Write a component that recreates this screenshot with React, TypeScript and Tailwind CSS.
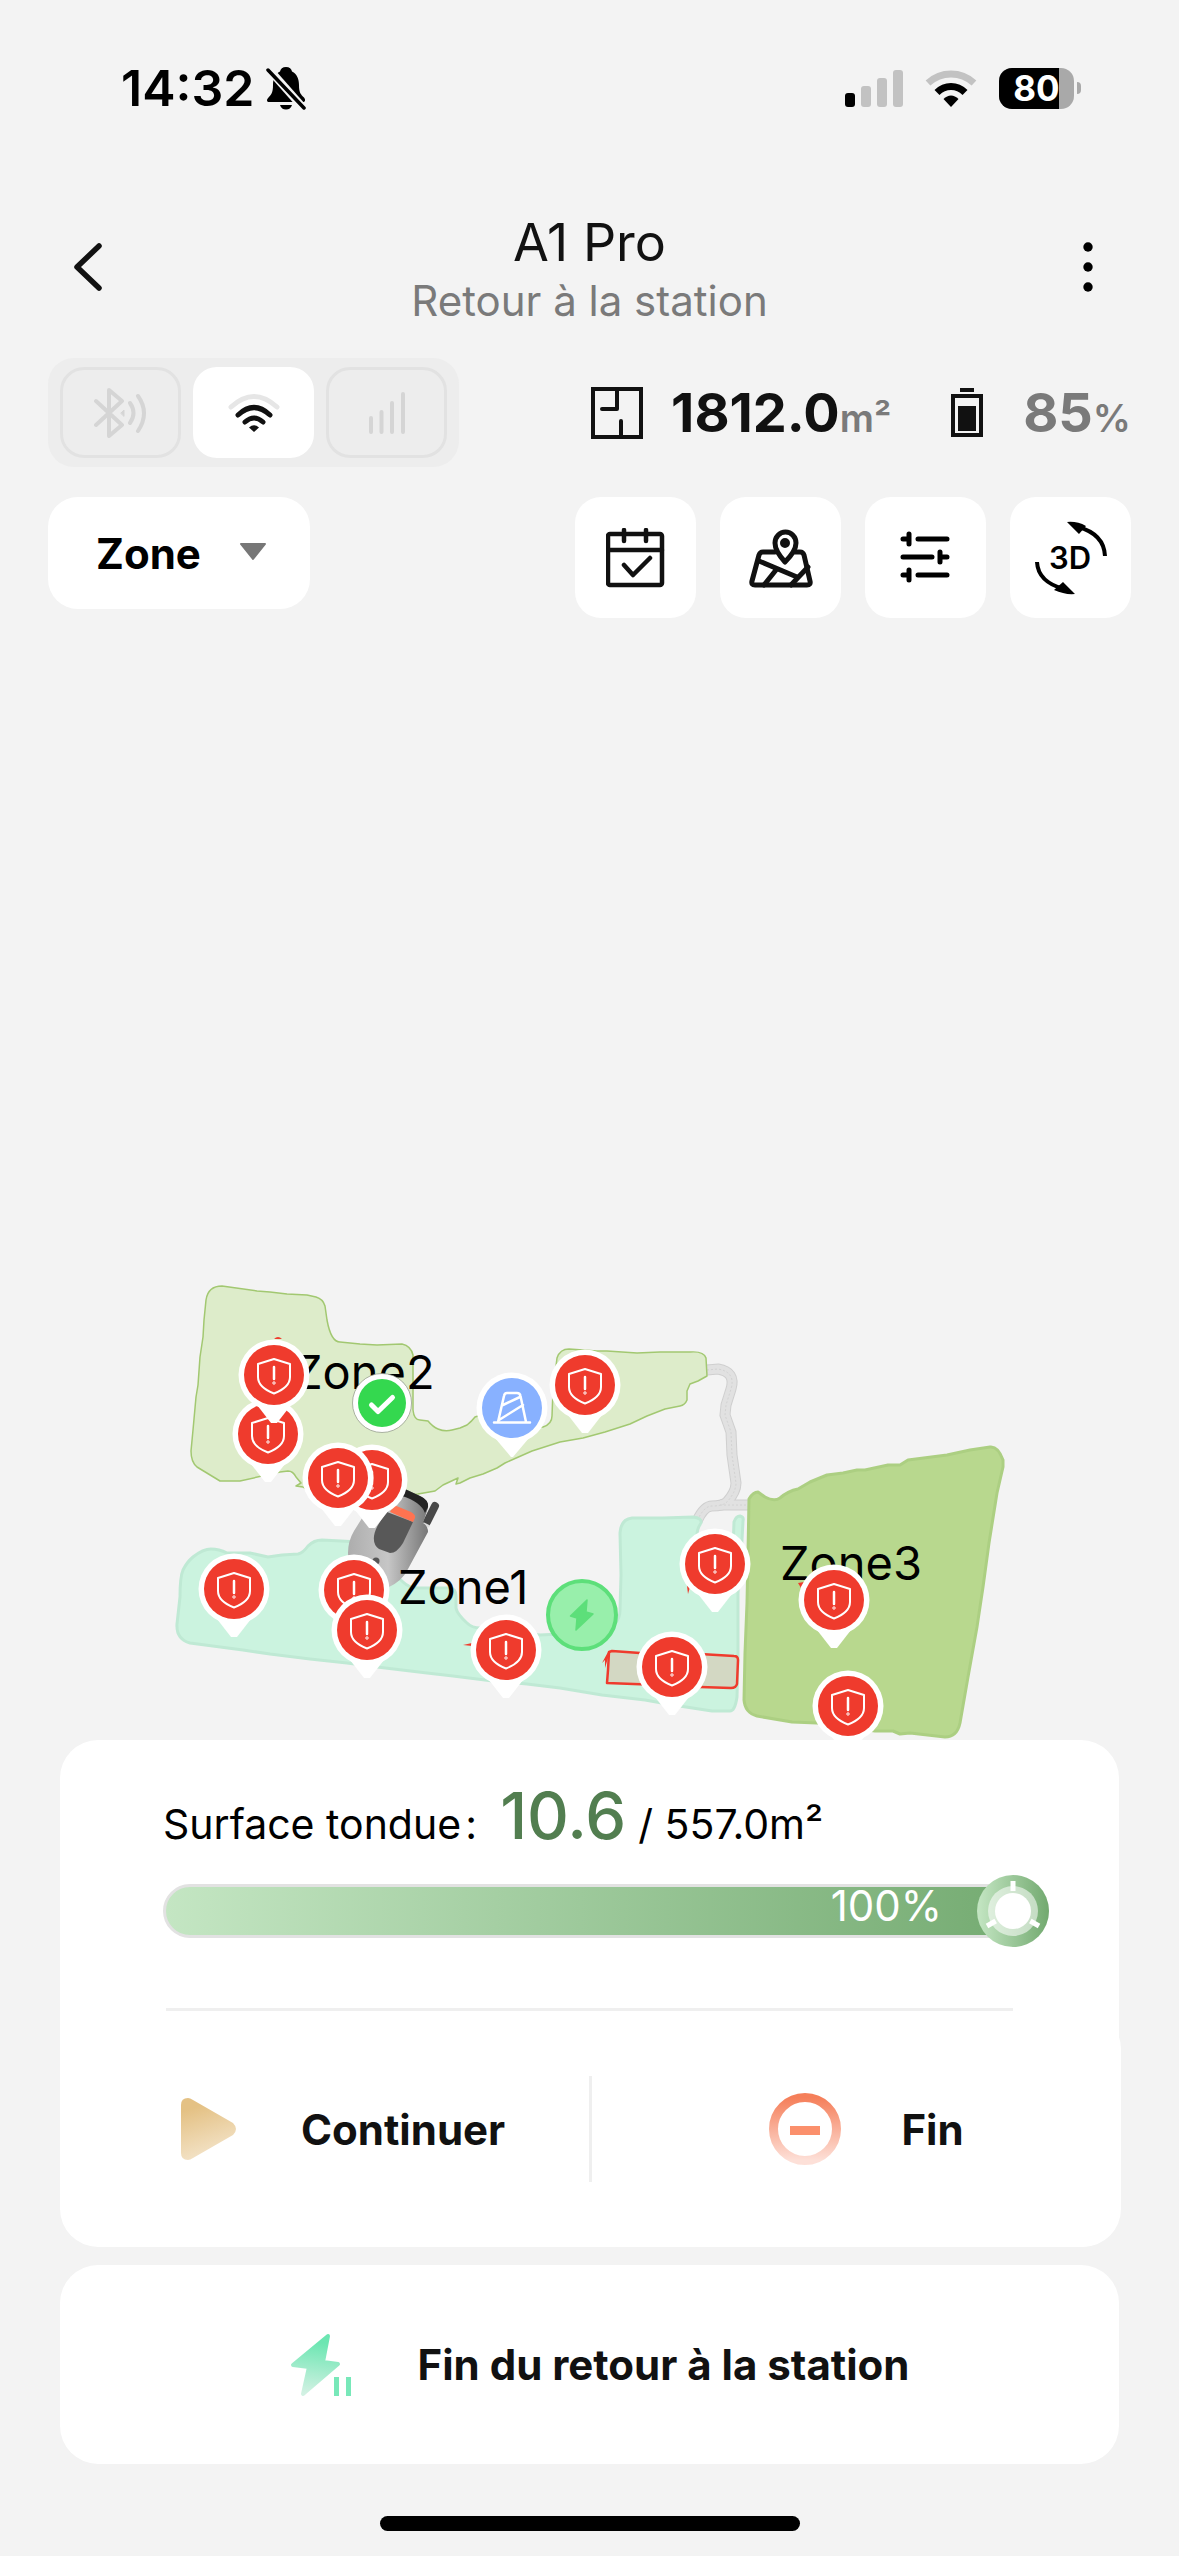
import { useState } from "react";
import type { ReactNode } from "react";

type Link = "bluetooth" | "wifi" | "cellular";

const ALERTS = [
	{ x: 268, y: 1434 },
	{ x: 274, y: 1375 },
	{ x: 372, y: 1480 },
	{ x: 338, y: 1478 },
	{ x: 234, y: 1589 },
	{ x: 354, y: 1590 },
	{ x: 367, y: 1630 },
	{ x: 585, y: 1385 },
	{ x: 715, y: 1564 },
	{ x: 506, y: 1650 },
	{ x: 672, y: 1667 },
	{ x: 834, y: 1600 },
	{ x: 848, y: 1706 },
];

const ZONE_1 =
	"M183 1570Q187 1562 193 1557Q203 1549 211 1549Q219 1549 227 1553L250 1553L268 1557L282 1555L298 1554Q303 1553 308 1546Q314 1540 322 1540L360 1542L403 1582Q409 1588 418 1588L450 1588Q456 1589 456 1596L456 1608Q457 1614 467 1623Q472 1628 480 1628L540 1635L600 1632Q620 1626 620 1610L621 1575L620 1533Q621 1519 632 1518L663 1518L693 1517Q702 1518 701 1523Q696 1530 697 1540L700 1570L732 1575L734 1522Q736 1516 740 1516Q744 1517 743 1521L742 1540L738 1593L738 1657L737 1697Q735 1711 730 1711L712 1711L673 1705L645 1700L602 1695L560 1688L527 1684L493 1681L453 1676L427 1673L377 1667L347 1663L310 1659L270 1654L243 1650L190 1643Q176 1639 177 1624L180 1597Q180 1577 183 1570Z";

const ZONE_2 =
	"M206 1300Q208 1286 222 1286L257 1291L270 1292L287 1294L307 1295L316 1297Q323 1299 325 1306L327 1320Q331 1342 340 1342L360 1344L377 1345L402 1344Q411 1346 413 1355L413 1410Q414 1420 420 1420L428 1421Q433 1427 438 1429Q445 1432 452 1430L460 1428L467 1425Q472 1421 475 1417L490 1412L530 1428L543 1427Q552 1424 552 1416L553 1390L557 1358Q560 1349 569 1349L597 1351L607 1351L637 1353L660 1352L690 1352Q704 1351 706 1358L707 1376L698 1381L690 1384L687 1391L687 1400Q685 1405 680 1406L665 1409L647 1416L630 1424L605 1432L583 1438L560 1442L532 1451L505 1463L497 1468L483 1474L470 1478L460 1483L456 1484L458 1478L443 1485L435 1491L418 1494L370 1500L310 1492L303 1487L296 1486L301 1483L296 1477Q293 1471 288 1471L280 1472L240 1481L220 1481L197 1467Q191 1462 191 1451L193 1430L196 1397L198 1385L200 1357L203 1337L204 1320Z";

const ZONE_3 =
	"M749 1499Q753 1492 758 1492L765 1497Q774 1502 780 1498Q788 1491 798 1489L810 1482L827 1475L843 1473L857 1470L865 1470L888 1465L900 1465L908 1460L947 1455L970 1450L990 1447Q998 1446 1003 1460L1003 1467L997 1493L989 1543L983 1587L977 1627L968 1677L960 1723Q957 1737 945 1737L910 1733L900 1734L893 1731L875 1731L817 1723L792 1722L757 1716Q745 1713 744 1700L745 1653L747 1603L748 1553Z";

const ROADS = [
	"M707 1370L718 1369Q736 1372 731 1389L726 1405L725 1415L731 1432L732 1455L736 1483Q736 1492 727 1502Q723 1506 712 1506Q704 1506 697 1521",
	"M720 1505L750 1505",
];

function BellOffIcon() {
	return (
		<svg viewBox="0 0 40 44" className="h-[44px] w-[40px]" aria-hidden="true">
			<path
				d="M20 1c-3.500 0-5.500 2-6 4.500C9 8 7 13 7 19c0 8-2 10-4.500 12.500C0 34 1 36 3 36h34c2 0 3-2 1-4.500C35 28.500 33 27 33 19c0-6-2-11-7-13.500C25.500 3 23.500 1 20 1zM14 39h12c-1 3-3 4.500-6 4.500S15 42 14 39z"
			/>
			<path d="M1 1L39 44" stroke="#f3f3f3" strokeWidth="8" />
			<path d="M2 4L38 42" stroke="#000" strokeWidth="3.500" strokeLinecap="round" />
		</svg>
	);
}

function StatusBar() {
	return (
		<div className="flex h-44 items-center justify-between pr-[98px] pl-[121px]">
			<div className="flex items-center gap-3 text-[50px] leading-none font-semibold">
				<span>14:32</span>
				<BellOffIcon />
			</div>
			<div className="flex items-center gap-[22px]">
				<svg viewBox="0 0 58 37" className="h-[37px] w-[58px]" aria-hidden="true">
					<rect x="0" y="23" width="10" height="14" rx="3" />
					<rect x="16" y="16" width="10" height="21" rx="3" fill="#c2c2c2" />
					<rect x="32" y="8" width="10" height="29" rx="3" fill="#c2c2c2" />
					<rect x="48" y="0" width="10" height="37" rx="3" fill="#c2c2c2" />
				</svg>
				<svg viewBox="0 0 52 37" className="h-[37px] w-[52px]" aria-hidden="true">
					<path d="M3 13Q13 4 26 4Q39 4 49 13" fill="none" stroke="#c2c2c2" strokeWidth="7" />
					<path d="M12 22.500Q18 16.500 26 16.500Q34 16.500 40 22.500" fill="none" stroke="#000" strokeWidth="7" />
					<path d="M26 37L18.500 29Q22 25.500 26 25.500Q30 25.500 33.500 29Z" />
				</svg>
				<div className="flex items-center gap-[3px]">
					<div className="relative flex h-[41px] w-[75px] items-center justify-center overflow-hidden rounded-[13px] bg-[#a9a9a9]">
						<div className="absolute inset-y-0 left-0 w-4/5 bg-black" />
						<span className="relative text-[35px] leading-none font-bold text-white">80</span>
					</div>
					<div className="h-3 w-1 rounded-r-full bg-[#a9a9a9]" />
				</div>
			</div>
		</div>
	);
}

function Header() {
	return (
		<header className="flex h-[182px] items-center justify-between px-[51px]">
			<button aria-label="Retour" className="flex h-20 w-20 items-center pl-[22px]">
				<svg viewBox="0 0 30 50" className="h-[50px] w-[30px]" fill="none" stroke="#111" strokeWidth="5.500" strokeLinecap="round" strokeLinejoin="round">
					<path d="M26 4L4 25L26 46" />
				</svg>
			</button>
			<div className="flex flex-col items-center pt-1">
				<h1 className="text-[52px] leading-[64px] text-[#111]">A1 Pro</h1>
				<p className="text-[42px] leading-[52px] text-[#7a7a7a]">Retour à la station</p>
			</div>
			<button aria-label="Plus d'options" className="flex h-20 w-20 items-center justify-center">
				<svg viewBox="0 0 10 50" className="h-[50px] w-[10px]">
					<circle cx="5" cy="5" r="4.700" />
					<circle cx="5" cy="25" r="4.700" />
					<circle cx="5" cy="45" r="4.700" />
				</svg>
			</button>
		</header>
	);
}

const LINKS: { id: Link; label: string; icon: ReactNode }[] = [
	{
		id: "bluetooth",
		label: "Bluetooth",
		icon: (
			<svg viewBox="0 0 54 50" className="h-[50px] w-[54px]" fill="none" stroke="#d5d5d5" strokeWidth="4" strokeLinecap="round" strokeLinejoin="round">
				<path d="M2 13L28 37L15 48V2L28 13L2 37" />
				<path d="M36 15Q43 25 36 35M44 8Q56 25 44 43" />
				<path d="M27 25L30 22V28Z" fill="#d5d5d5" strokeWidth="1" />
			</svg>
		),
	},
	{
		id: "wifi",
		label: "Wi-Fi",
		icon: (
			<svg viewBox="0 0 54 40" className="h-[40px] w-[54px]" fill="none" stroke="#111" strokeWidth="5" strokeLinecap="round">
				<path d="M4 14Q27 -7 50 14" stroke="#e6e6e6" />
				<path d="M11 22Q27 7 43 22M18 29Q27 21 36 29" />
				<path d="M27 39L22 34.500Q27 30 32 34.500Z" fill="#111" stroke="none" />
			</svg>
		),
	},
	{
		id: "cellular",
		label: "Réseau mobile",
		icon: (
			<svg viewBox="0 0 38 44" className="h-[44px] w-[38px]" stroke="#d5d5d5" strokeWidth="4" strokeLinecap="round">
				<path d="M3 27V41M13.500 21V41M24 12V41M35 3V41" />
			</svg>
		),
	},
];

function LinkSwitch() {
	const [active, setActive] = useState<Link>("wifi");

	return (
		<div className="flex gap-3 rounded-[26px] bg-[#ededed] px-3 py-[9px]">
			{LINKS.map((link) => (
				<button
					key={link.id}
					aria-label={link.label}
					aria-pressed={active === link.id}
					onClick={() => setActive(link.id)}
					className={
						active === link.id
							? "flex h-[91px] w-[121px] items-center justify-center rounded-3xl bg-white"
							: "flex h-[91px] w-[121px] items-center justify-center rounded-3xl border-3 border-[#e2e2e2]"
					}
				>
					{link.icon}
				</button>
			))}
		</div>
	);
}

function StatsRow() {
	return (
		<div className="flex items-center justify-between px-12">
			<LinkSwitch />
			<div className="flex items-center">
				<svg viewBox="0 0 52 52" className="mr-7 h-[52px] w-[52px]" fill="none" stroke="#111" strokeWidth="4" aria-hidden="true">
					<path d="M2 2H50V50H2Z" />
					<path d="M26 2V22M26 22H11M30 50V34" strokeLinecap="round" />
				</svg>
				<span className="text-[54px] leading-[64px] font-bold text-[#111]">
					1812.0<span className="text-[38px] leading-none font-semibold text-[#7a7a7a]">m²</span>
				</span>
				<svg viewBox="0 0 32 50" className="mr-10 ml-[60px] h-[50px] w-[32px]" aria-hidden="true">
					<path d="M9 0H23V4H9Z" fill="#111" />
					<path d="M2 8H30V47H2Z" fill="none" stroke="#111" strokeWidth="4" />
					<path d="M7 18H25V43H7Z" fill="#111" />
				</svg>
				<span className="text-[54px] leading-[64px] font-bold text-[#7a7a7a]">
					85<span className="text-[38px] leading-none font-semibold">%</span>
				</span>
			</div>
		</div>
	);
}

function ToolButton({ label, children }: { label: string; children: ReactNode }) {
	return (
		<button aria-label={label} className="flex h-[121px] w-[121px] items-center justify-center rounded-[26px] bg-white">
			{children}
		</button>
	);
}

function Toolbar() {
	return (
		<div className="mt-[30px] flex items-start justify-between px-12">
			<label className="relative block">
				<select aria-label="Vue" className="h-28 w-[262px] appearance-none rounded-[30px] bg-white pl-12 text-[42px] font-bold text-black">
					<option>Zone</option>
				</select>
				<svg viewBox="0 0 28 18" className="pointer-events-none absolute top-[46px] right-[43px] h-[18px] w-[28px]" aria-hidden="true">
					<path d="M2 1H26L14 16Z" fill="#777" stroke="#777" strokeWidth="2" strokeLinejoin="round" />
				</svg>
			</label>
			<div className="flex gap-6">
				<ToolButton label="Programme">
					<svg viewBox="0 0 60 60" className="h-[60px] w-[60px]" fill="none" stroke="#111" strokeWidth="4.500" strokeLinecap="round" strokeLinejoin="round">
						<rect x="2" y="6" width="54" height="51" rx="2" />
						<path d="M2 22H56M18 2V13M40 2V13M18 37L27 47L44 30" />
					</svg>
				</ToolButton>
				<ToolButton label="Carte">
					<svg viewBox="0 0 64 60" className="h-[60px] w-[64px]" fill="none" stroke="#111" strokeWidth="5" strokeLinecap="round" strokeLinejoin="round">
						<path d="M26 24H14Q11 24 10 27L3 53Q2 57 6 57H58Q62 57 61 53L55 27Q54 24 51 24H46" />
						<path d="M10 33L48 49M15 57L27 42M42 57L59 39" />
						<path d="M36 34Q26 23 26 15A10.500 11 0 0 1 47 15Q47 23 36 34Z" />
						<circle cx="36" cy="15" r="2.500" />
					</svg>
				</ToolButton>
				<ToolButton label="Réglages">
					<svg viewBox="0 0 52 54" className="h-[54px] w-[52px]" stroke="#000" strokeWidth="5" strokeLinecap="round">
						<path d="M3 8H9M18 8H47M9 3V13M3 26H32M40 26H47M40 21V31M3 44H9M18 44H47M9 39V49" />
					</svg>
				</ToolButton>
				<ToolButton label="Vue 3D">
					<svg viewBox="0 0 76 76" className="h-[76px] w-[76px]">
						<path d="M45 7Q71 14 72 36M31 69Q5 62 4 42" fill="none" stroke="#000" strokeWidth="4" />
						<path d="M34 2Q44 1 53 6L46 14ZM42 74Q32 75 21 70L30 62Z" />
						<text x="37" y="49" textAnchor="middle" fontSize="31" fontWeight="600">
							3D
						</text>
					</svg>
				</ToolButton>
			</div>
		</div>
	);
}

function AlertPin({ x, y }: { x: number; y: number }) {
	return (
		<g transform={`translate(${x} ${y})`}>
			<path d="M-17 30L-3 48H3L17 30Z" fill="#fff" />
			<circle r="35.500" fill="#fff" />
			<circle r="30" fill="#ef3b2d" />
			<path d="M0 -16L16 -11V2C16 10 9 15 0 18.500C-9 15 -16 10 -16 2V-11Z" fill="none" stroke="#fff" strokeWidth="2" strokeLinejoin="round" />
			<path d="M0 -8V4" stroke="#fff" strokeWidth="2.500" strokeLinecap="round" />
			<circle cy="8" r="1.200" fill="none" stroke="#fff" strokeWidth="1" />
		</g>
	);
}

function Mower() {
	return (
		<g>
			<path d="M435 1506L427 1522" stroke="#484848" strokeWidth="8" strokeLinecap="round" />
			<path d="M424 1524L428 1526" stroke="#ddd" strokeWidth="3" strokeLinecap="round" />
			<path
				d="M382 1486L407 1490L422 1497Q429 1501 428 1508L423 1523Q428 1526 428 1532L408 1569Q402 1581 389 1587L350 1590L348 1553Q348 1541 354 1531Z"
				fill="url(#mower-body)"
			/>
			<path d="M405 1489L420 1496Q429 1500 428 1507L425 1513Q421 1502 402 1496Z" fill="#232323" />
			<path d="M387 1512L413 1522L403 1543Q397 1553 390 1553L379 1549Q373 1545 374 1536Q375 1527 387 1512Z" fill="#585858" />
			<path d="M394 1505L411 1512Q416 1515 415 1518L413 1522L390 1512Z" fill="#ff7351" />
			<circle cx="376" cy="1561" r="3.500" fill="#555" />
		</g>
	);
}

function ZoneMap() {
	return (
		<svg viewBox="0 618 1179 1122" className="block w-full" role="img" aria-label="Carte des zones">
			<defs>
				<linearGradient id="mower-body" x1="0" y1="0" x2="1" y2="0">
					<stop offset="0" stopColor="#adadad" />
					<stop offset="0.500" stopColor="#c6c6c6" />
					<stop offset="1" stopColor="#777" />
				</linearGradient>
			</defs>

			{ROADS.map((d) => (
				<path key={d} d={d} fill="none" stroke="#cfcfcf" strokeWidth="11" />
			))}
			{ROADS.map((d) => (
				<path key={d} d={d} fill="none" stroke="#e1e1e1" strokeWidth="9" />
			))}
			{ROADS.map((d) => (
				<path key={d} d={d} fill="none" stroke="#d2d2d2" strokeWidth="1" strokeDasharray="2 2" />
			))}

			<path d={ZONE_2} fill="#ddecca" stroke="#a2c871" strokeWidth="1.500" strokeLinejoin="round" />
			<path d={ZONE_1} fill="#cbf3df" stroke="#bfe9d4" strokeWidth="3" strokeLinejoin="round" />
			<path d={ZONE_3} fill="#b8d88e" stroke="#accf82" strokeWidth="3" strokeLinejoin="round" />

			{/* no-go areas */}
			<path
				d="M609 1652L612 1651L640 1653L700 1654L734 1656Q738 1656 738 1660L737 1684Q736 1688 731 1688L700 1687L660 1685L607 1683L608 1670Z"
				fill="#d3d8c3"
				stroke="#ef3b2d"
				strokeWidth="2.500"
				strokeLinejoin="round"
			/>
			<path d="M608 1652L602 1663L605 1660V1668L608 1658Z" fill="#ef3b2d" />
			<path d="M274 1339Q278 1335 282 1339ZM463 1645L472 1643V1646ZM687 1586L688 1594L690 1587ZM798 1583L804 1582L801 1588Z" fill="#ef3b2d" />

			<Mower />

			<g fontSize="47" fill="#000">
				<text x="293" y="1389">Zone2</text>
				<text x="398" y="1604">Zone1</text>
				<text x="780" y="1580">Zone3</text>
			</g>

			{/* charging station */}
			<circle cx="582" cy="1615" r="34" fill="#98efab" stroke="#5ddf7a" strokeWidth="4" />
			<path d="M587 1600L570.500 1616L577 1618L576 1630L593 1614L586 1612Z" fill="#5ddf7a" stroke="#5ddf7a" strokeWidth="1.500" strokeLinejoin="round" />

			{ALERTS.map((pin) => (
				<AlertPin key={`${pin.x}-${pin.y}`} x={pin.x} y={pin.y} />
			))}

			<g transform="translate(512 1408)">
				<path d="M-17 30L-1 49H1L17 30Z" fill="#fff" />
				<circle r="35.500" fill="#fff" />
				<circle r="30" fill="#88b1ff" />
				<path
					d="M-18 14.500H18M-14 14L-8 -12Q-7.500 -15 -5 -15H5Q8 -15 8.500 -12L14 14M-9 -3L8 -11M-13 12L11 -3"
					fill="none"
					stroke="#fff"
					strokeWidth="2.500"
					strokeLinecap="round"
					strokeLinejoin="round"
				/>
			</g>

			<g transform="translate(382 1403)">
				<circle r="29.500" fill="#fff" stroke="#8c9484" strokeWidth="0.700" />
				<circle r="24" fill="#34d84f" />
				<path d="M-10.500 2L-4 8.500L10.500 -5.500" fill="none" stroke="#fff" strokeWidth="5" strokeLinecap="round" strokeLinejoin="round" />
			</g>
		</svg>
	);
}

function ProgressBar({ value }: { value: number }) {
	return (
		<div
			role="progressbar"
			aria-label="Surface tondue"
			aria-valuenow={value}
			className="relative mr-[70px] ml-[103px] flex h-[54px] items-start justify-end rounded-full border-3 border-[#e2e2e2] bg-linear-to-r from-[#c4e6c3] to-[#72a96f] pr-[104px]"
		>
			<span className="text-[42px] leading-[38px] text-white">{value}%</span>
			<svg viewBox="-36 -36 72 72" className="absolute -top-3 -right-[3px] h-[72px] w-[72px]" aria-hidden="true">
				<defs>
					<linearGradient id="knob">
						<stop offset="0" stopColor="#c4e6c3" />
						<stop offset="1" stopColor="#72a96f" />
					</linearGradient>
				</defs>
				<circle r="36" fill="url(#knob)" />
				<circle r="25" fill="#fff" fillOpacity="0.550" />
				<circle r="18" fill="#fff" />
				<g stroke="#fff" strokeWidth="5">
					<path d="M0 -20V-30" />
					<path d="M0 -20V-30" transform="rotate(120)" />
					<path d="M0 -20V-30" transform="rotate(240)" />
				</g>
			</svg>
		</div>
	);
}

function TaskCard() {
	return (
		<section className="mx-[60px] rounded-[38px] bg-white pt-9">
			<p className="flex items-baseline pl-[103px] text-[41px] leading-[80px] text-black">
				<span>Surface tondue</span>
				<span className="w-[39px] pl-1">:</span>
				<span className="text-[65px] font-medium text-[#527e50]">10.6</span>
				<span className="pl-3">/ 557.0m²</span>
			</p>
			<div className="mt-5">
				<ProgressBar value={100} />
			</div>
			<div className="mt-[70px] mr-[106px] ml-[106px] h-[3px] bg-[#efefef]" />
			<div className="-mr-[2px] grid h-[236px] grid-cols-[1fr_auto_1fr] items-center">
				<button className="flex h-full items-center gap-16 rounded-[38px] pl-[120px]">
					<svg viewBox="0 0 57 62" className="h-[62px] w-[57px]" aria-hidden="true">
						<defs>
							<linearGradient id="play" x1="0.200" y1="0" x2="0.500" y2="1">
								<stop offset="0.150" stopColor="#e4c184" />
								<stop offset="1" stopColor="#f4e5cc" />
							</linearGradient>
						</defs>
						<path d="M1 7Q1 0 8 0Q10 0 13 2L53 25Q56 28 56 31Q56 34 53 37L13 60Q10 62 8 62Q1 62 1 55Z" fill="url(#play)" />
					</svg>
					<span className="text-[42px] font-bold text-[#111]">Continuer</span>
				</button>
				<div className="h-[106px] w-[3px] bg-[#efefef]" />
				<button className="flex h-full items-center justify-center gap-[60px] rounded-[38px] bg-white pl-[20px]">
					<svg viewBox="0 0 72 72" className="h-[72px] w-[72px]" aria-hidden="true">
						<defs>
							<linearGradient id="stop" x1="0" y1="0" x2="0" y2="1">
								<stop offset="0" stopColor="#f57f5a" />
								<stop offset="1" stopColor="#fde0d8" />
							</linearGradient>
						</defs>
						<circle cx="36" cy="36" r="31.500" fill="none" stroke="url(#stop)" strokeWidth="9" />
						<rect x="21" y="33" width="30" height="9" fill="#fb906c" />
					</svg>
					<span className="text-[42px] font-bold text-[#111]">Fin</span>
				</button>
			</div>
		</section>
	);
}

function DockCard() {
	return (
		<button className="mx-[60px] mt-[18px] flex h-[199px] items-center justify-center gap-[64px] rounded-[38px] bg-white pl-5">
			<svg viewBox="0 0 64 64" className="h-[64px] w-[64px]" aria-hidden="true">
				<defs>
					<linearGradient id="dock" x1="0.500" y1="0" x2="0.400" y2="1">
						<stop offset="0.100" stopColor="#6ce6b2" />
						<stop offset="1" stopColor="#d2f1e3" />
					</linearGradient>
				</defs>
				<path
					d="M38 3L3 32L19 34L13 61L48 31L33 29Z"
					fill="url(#dock)"
					stroke="url(#dock)"
					strokeWidth="4"
					strokeLinejoin="round"
				/>
				<path d="M44 44h5v19h-5zM56 44h5v19h-5z" fill="#78e8b9" />
			</svg>
			<span className="text-[42px] font-bold text-[#111]">Fin du retour à la station</span>
		</button>
	);
}

export default function App() {
	return (
		<main className="flex min-h-screen flex-col bg-[#f3f3f3] font-['Inter','Liberation_Sans',sans-serif] text-black">
			<StatusBar />
			<Header />
			<StatsRow />
			<Toolbar />
			<ZoneMap />
			<TaskCard />
			<DockCard />
			<div className="mt-[52px] mb-6 h-[15px] w-[420px] self-center rounded-full bg-black" />
		</main>
	);
}
